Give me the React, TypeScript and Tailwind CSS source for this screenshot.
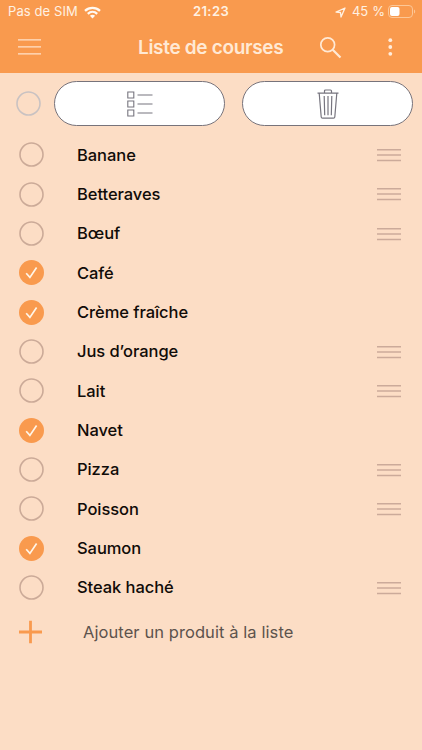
type Item = { name: string; done?: boolean; handle?: boolean };

const items: Item[] = [
  { name: 'Banane', handle: true },
  { name: 'Betteraves', handle: true },
  { name: 'Bœuf', handle: true },
  { name: 'Café', done: true },
  { name: 'Crème fraîche', done: true },
  { name: 'Jus d’orange', handle: true },
  { name: 'Lait', handle: true },
  { name: 'Navet', done: true },
  { name: 'Pizza', handle: true },
  { name: 'Poisson', handle: true },
  { name: 'Saumon', done: true },
  { name: 'Steak haché', handle: true },
];

function Ring({ color }: { color: string }) {
  return (
    <svg width="25" height="25" viewBox="0 0 25 25" fill="none" stroke={color} strokeWidth="1.6">
      <circle cx="12.5" cy="12.5" r="11.5" />
    </svg>
  );
}

function StatusBar() {
  return (
    <div className="flex h-6 items-center pl-2 pr-[6px] text-[13px] text-[#fff1e2]">
      <div className="flex flex-1 items-center gap-[6px]">
        <span className="tracking-[0.1px]">Pas de SIM</span>
        <svg width="17" height="13" viewBox="0 0 17 13" fill="none" stroke="#fff9f2" strokeWidth="2.3">
          <path d="M1 4.9C5.2 .9 11.8 .9 16 4.9" />
          <path d="M3.8 7.8C6.5 5.3 10.5 5.3 13.2 7.8" />
          <path d="M8.5 12.4L5.9 9.8C7.3 8.5 9.7 8.5 11.1 9.8Z" fill="#fff9f2" stroke="none" />
        </svg>
      </div>
      <span className="mr-[2px] text-[13px] font-semibold tracking-[0.4px]">21:23</span>
      <div className="flex flex-1 items-center justify-end">
        <svg className="mr-[6px]" width="11" height="11" viewBox="0 0 11 11" fill="none" stroke="#fff1e2" strokeWidth="1.3" strokeLinejoin="round">
          <path d="M10 1L1 5.1L5.5 5.5L6 10Z" />
        </svg>
        <span className="mr-[3px] whitespace-nowrap tracking-[0.1px]">45 %</span>
        <svg className="-mt-[2px]" width="28" height="13" viewBox="0 0 28 13" fill="none">
          <rect x=".5" y=".5" width="24" height="12" rx="3.5" stroke="#fcc797" />
          <rect x="2" y="2" width="9.5" height="9" rx="2" fill="#fff" />
          <path d="M26 4.5C27.6 5.2 27.6 7.8 26 8.5Z" fill="#fcc797" />
        </svg>
      </div>
    </div>
  );
}

function Header() {
  return (
    <div className="flex h-[46px] items-center pl-[18px] pr-[25px]">
      <svg width="24" height="18" viewBox="0 0 24 18" stroke="#ffe2ca" strokeWidth="1.3">
        <path d="M0 1.8H23M0 8.8H23M0 15.8H23" />
      </svg>
      <h1 className="ml-[96px] mt-[2px] w-[146px] whitespace-nowrap text-[19px] font-semibold tracking-[-0.32px] text-[#ffe9d5]">Liste de courses</h1>
      <svg className="ml-[35px]" width="23" height="23" viewBox="0 0 23 23" fill="none" stroke="#ffe9d5" strokeWidth="1.7">
        <circle cx="8.7" cy="8.7" r="6.9" />
        <path d="M13.7 13.7L21.5 21.5" strokeWidth="2.2" />
      </svg>
      <svg className="ml-auto" width="10" height="20" viewBox="0 0 10 20" fill="#ffecdb">
        <circle cx="3.3" cy="3.2" r="1.9" />
        <circle cx="3.3" cy="10" r="1.9" />
        <circle cx="3.3" cy="16.8" r="1.9" />
      </svg>
    </div>
  );
}

function Toolbar() {
  return (
    <div className="flex h-[62px] items-center pl-4 pr-[9px]">
      <Ring color="#c9c2c2" />
      <button className="ml-[13px] flex h-[45px] w-[171px] items-center justify-center rounded-full border border-[#77737b] bg-white">
        <svg width="26" height="26" viewBox="0 0 26 26" fill="none" stroke="#77757f" strokeWidth="1.1">
          <path d="M.8 1H6.8V7H.8ZM.8 10H6.8V16H.8ZM.8 19H6.8V25H.8ZM10.5 4H25.5M10.5 13H25.5M10.5 22H25.5" />
        </svg>
      </button>
      <button className="ml-[17px] flex h-[45px] w-[171px] items-center justify-center rounded-full border border-[#77737b] bg-white">
        <svg width="22" height="30" viewBox="0 0 22 30" fill="none" stroke="#77757f" strokeWidth="1.2">
          <path d="M.5 4.2H21.5M2.2 4.2L4.2 28Q4.3 29.2 5.5 29.2H16.5Q17.7 29.2 17.8 28L19.8 4.2M7.5 4V2Q7.5 1 8.5 1H13.5Q14.5 1 14.5 2V4M7.2 7L7.7 26.2M11 7V26.2M14.8 7L14.3 26.2" />
        </svg>
      </button>
    </div>
  );
}

function Row({ name, done, handle }: Item) {
  return (
    <li className="flex h-[39.33px] items-center pl-[19px] pr-[21px]">
      {done ? (
        <span className="flex size-[25px] items-center justify-center rounded-full bg-[#f99a4e]">
          <svg width="13" height="13" viewBox="0 0 13 13" fill="none" stroke="#fff5e8" strokeWidth="1.7">
            <path d="M1.2 7.2L4.9 11.4L11.6 1.5" />
          </svg>
        </span>
      ) : (
        <Ring color="#cbaa98" />
      )}
      <span className="ml-[33px] flex-1 text-[16.5px] font-medium tracking-[-0.06px] text-[#100b08]">{name}</span>
      {handle && (
        <svg width="24" height="14" viewBox="0 0 24 14" stroke="#cbaa9a" strokeWidth="1.5">
          <path d="M0 1.7H24M0 7.1H24M0 12.4H24" />
        </svg>
      )}
    </li>
  );
}

export default function App() {
  return (
    <main className="h-[750px] w-full overflow-hidden bg-[#fcddc5] font-['Inter','Liberation_Sans',sans-serif]">
      <header className="h-[72.5px] bg-[#f99a4e]">
        <StatusBar />
        <Header />
      </header>
      <Toolbar />
      <ul className="mt-[0.8px]">
        {items.map((item) => (
          <Row key={item.name} {...item} />
        ))}
      </ul>
      <div className="flex h-[50px] items-center pl-[19px]">
        <svg width="24" height="24" viewBox="0 0 24 24" stroke="#f99a4e" strokeWidth="2.8">
          <path d="M0 12H23M11.5 .7V23.3" />
        </svg>
        <span className="ml-[40px] text-[16.5px] tracking-[0.08px] text-[#5d534d]">Ajouter un produit à la liste</span>
      </div>
    </main>
  );
}
